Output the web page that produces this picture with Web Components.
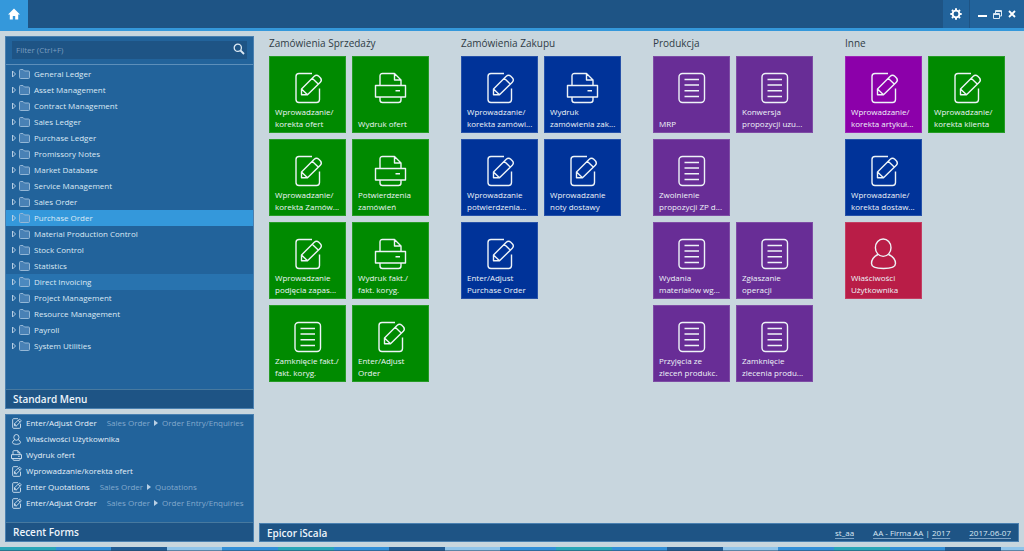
<!DOCTYPE html>
<html lang="pl">
<head>
<meta charset="utf-8">
<title>Epicor iScala</title>
<style>
  html, body { margin: 0; height: 100%; }
  body {
    background: #c8d6de;
    font-family: "Open Sans", "Noto Sans", sans-serif;
    font-size: 8px;
    line-height: 16px;
    color: #dce9f4;
    --panel: #22639b;
    --dark: #1e5485;
    --accent: #3498db;
    --edge: #4a80b0;
  }
</style>
</head>
<body>
<iscala-app></iscala-app>
<script>
const ICONS = {
  edit: '<path d="M21 1.5H8Q5 1.5 5 4.5V27.500Q5 30.500 8 30.500H25.500Q28.500 30.500 28.500 27.500V16.500"/><path d="M16.500 22.800H10.500V17L23 4.500Q25.500 2.300 27.800 4.300L29.500 6Q31.300 8.200 29.300 10.200ZM10.500 17L16.500 22.800M21.200 6.300L27.500 12.200"/>',
  print: '<path d="M6 13.500V4Q6 1.500 8.500 1.500H20.500L27 8V13.500M20.500 1.500V8H27M1.500 13.500H31.500V25H1.500ZM6 25V28Q6 30.500 8.500 30.500H24.500Q27 30.500 27 28V25M21.500 18.700H26"/>',
  doc: '<rect x="4" y="1.500" width="25.500" height="29" rx="3.500"/><path d="M9.500 7.500H24M9.500 13H24M9.500 18.700H24M9.500 24.500H24"/>',
  user: '<ellipse cx="16.200" cy="9.700" rx="7.800" ry="8.700"/><path d="M11 16.500Q4.500 19.500 4.500 25.500Q4.500 30.500 16.500 30.500Q28.500 30.500 28.500 25.500Q28.500 19.500 21.500 16.500"/>'
};
const icon = (name, w, h, stroke) =>
  `<svg width="${w}" height="${h}" viewBox="0 0 33 32" fill="none" stroke="currentColor" stroke-width="${stroke}" stroke-linejoin="round" aria-hidden="true">${ICONS[name]}</svg>`;

const RESET = `*{box-sizing:border-box}
  button{all:unset;box-sizing:border-box;cursor:pointer}
  svg{display:block;flex:none}`;

function define(name, render) {
  customElements.define(name, class extends HTMLElement {
    connectedCallback() {
      if (this.shadowRoot) return;
      const t = document.createElement('template');
      t.innerHTML = render(this);
      this.attachShadow({ mode: 'open' }).append(t.content.cloneNode(true));
    }
  });
}

define('title-bar', () => `<style>${RESET}
  :host{display:flex;height:31px;background:var(--dark);border-bottom:3px solid var(--accent)}
  button{display:grid;place-items:center;color:#fff}
  .home{width:28px;background:var(--accent)}
  .gear{width:27px;margin-left:auto;background:var(--panel);border-right:1px solid var(--dark)}
  .win{display:flex;align-items:center;justify-content:space-between;background:var(--panel);width:54px;padding:0 8px}
  </style>
  <button class="home" aria-label="Home"><svg width="12" height="12" viewBox="0 0 12 12" fill="#fff"><path d="M6 .5L12 6.500H10.200V11.500H7.200V8H4.800V11.500H1.800V6.500H0Z"/></svg></button>
  <button class="gear" aria-label="Settings"><svg width="12" height="12" viewBox="0 0 12 12" fill="none" stroke="#fff"><circle cx="6" cy="6" r="3.400" stroke-width="1.900"/><path stroke-width="2" d="M6 .3V2M6 10V11.700M.3 6H2M10 6H11.700M2 2L3.200 3.200M8.800 8.800L10 10M10 2L8.800 3.200M3.200 8.800L2 10"/></svg></button>
  <div class="win">
    <button aria-label="Minimize"><svg width="9" height="8" viewBox="0 0 9 8"><path d="M0 6H9" stroke="#fff" stroke-width="2"/></svg></button>
    <button aria-label="Restore"><svg width="9" height="9" viewBox="0 0 9 9" fill="none" stroke="#dce9f4"><path d="M2.500 3V.5H8.500V6H7M2 1.500H8.500M.5 3.500H6.500V8.500H.5ZM.5 4.500H6.500"/></svg></button>
    <button aria-label="Close"><svg width="8" height="8" viewBox="0 0 8 8"><path d="M1 1L7 7M7 1L1 7" stroke="#fff" stroke-width="1.800"/></svg></button>
  </div>`);

define('side-panel', el => `<style>${RESET}
  :host{display:flex;flex-direction:column;background:var(--panel);border:1px solid var(--edge)}
  .body{flex:1}
  h2{margin:0;padding:1px 7px 0;background:var(--dark);border-top:1px solid #47799f;font-size:10px;line-height:17px;font-weight:600;color:#eef5fb}
  </style><div class="body"><slot></slot></div><h2>${el.getAttribute('heading')}</h2>`);

define('filter-box', () => `<style>${RESET}
  :host{display:block;padding:4px 6px 5px;border-bottom:1px solid #5d8fba}
  label{display:flex;align-items:center;height:18px;background:var(--dark);padding:0 2px 0 4px}
  input{all:unset;flex:1;min-width:0;font-size:8px;line-height:18px;color:#fff}
  input::placeholder{color:#7a9cbf;opacity:1}
  svg{margin-bottom:2px}
  </style><label><input type="text" aria-label="Filter" placeholder="Filter (Ctrl+F)">
  <svg width="12" height="12" viewBox="0 0 12 12" fill="none" stroke="#dce9f4"><circle cx="4.800" cy="4.800" r="3.600" stroke-width="1.300"/><path d="M7.500 7.500L11 11" stroke-width="1.800"/></svg></label>`);

define('tree-item', () => `<style>${RESET}
  :host{display:block}
  :host([selected]){background:var(--accent)}
  :host([hovered]){background:#2873af}
  button{display:flex;align-items:center;width:100%;height:16px;padding-left:6px}
  .folder{margin:0 4px 0 3px}
  </style><button><svg width="4" height="8" viewBox="0 0 4 8" fill="none" stroke="#b5cde2"><path d="M.5 1L3.500 4L.5 7Z"/></svg>
  <svg class="folder" width="11" height="10" viewBox="0 0 11 10" fill="#6f9fd0" fill-opacity=".5" stroke="#94b7d6"><path d="M.5 1.500Q.5 .5 1.500 .5H4L5.500 2H9.500Q10.500 2 10.500 3V8.500Q10.500 9.500 9.500 9.500H1.500Q.5 9.500 .5 8.500Z"/></svg>
  <slot></slot></button>`);

define('recent-item', el => `<style>${RESET}
  :host{display:block}
  button{display:flex;align-items:center;width:100%;height:16px;padding-left:5px;white-space:nowrap}
  .name{margin:0 10px 0 4px;color:#e6f0f8}
  .path{display:flex;align-items:center;gap:4px;color:#82a9cd}
  </style><button>${icon(el.getAttribute('icon'), 11, 11, 2.6)}<span class="name"><slot></slot></span>${
    el.hasAttribute('path') ? `<span class="path">${el.getAttribute('path').split('>').map(s => `<span>${s}</span>`)
      .join('<svg width="4" height="6" viewBox="0 0 4 6" fill="#b9d0e5"><path d="M0 0L4 3L0 6Z"/></svg>')}</span>` : ''}</button>`);

define('app-tile', el => `<style>${RESET}
  :host{display:block;height:77px}
  button{display:flex;flex-direction:column;justify-content:space-between;width:100%;height:100%;
    background:var(--tile);border:1px solid rgba(255,255,255,.15);padding:15px 0 2px 5px;color:#eef4f8;line-height:12px;white-space:nowrap}
  svg{margin-left:16px}
  </style><button>${icon(el.getAttribute('icon'), 33, 32, 1.4)}<span><slot></slot></span></button>`);

define('tile-group', el => `<style>${RESET}
  :host{display:block}
  h2{margin:0 0 5px;font-size:10px;line-height:16px;font-weight:500;color:#303c46;white-space:nowrap}
  .grid{display:grid;grid-template-columns:77px 77px;gap:6px}
  ::slotted([first]){grid-column:1}
  </style><h2>${el.getAttribute('heading')}</h2><div class="grid"><slot></slot></div>`);

define('status-bar', () => `<style>${RESET}
  :host{display:flex;align-items:center;height:19px;padding:0 7px;background:var(--dark);border:1px solid var(--edge)}
  h1{margin:0 auto 0 0;font-size:10px;font-weight:600;color:#eef5fb}
  a{color:inherit;text-decoration:underline;text-decoration-thickness:1px;text-underline-offset:2px;text-decoration-color:#7da3c5}
  div{display:flex;gap:19px}
  </style><h1>Epicor iScala</h1><div><a href="#user">st_aa</a><span><a href="#company">AA - Firma AA</a> | <a href="#year">2017</a></span><a href="#date">2017-06-07</a></div>`);

define('colour-strip', () => `<style>
  :host{display:block;height:4px;border-bottom:1px solid rgba(40,70,100,.5);box-sizing:border-box;
  background:linear-gradient(90deg,#2ba6b8 20%,#3490d8 20% 40%,#215c94 40% 60%,#90c4ea 60% 80%,#3490d8 80%) 0 0/278px 100%}
  </style>`);

const modules = ['General Ledger','Asset Management','Contract Management','Sales Ledger','Purchase Ledger','Promissory Notes','Market Database','Service Management','Sales Order','Purchase Order','Material Production Control','Stock Control','Statistics','Direct Invoicing','Project Management','Resource Management','Payroll','System Utilities'];
const state = { 'Purchase Order': 'selected', 'Direct Invoicing': 'hovered' };
const recents = [
  ['edit','Enter/Adjust Order','Sales Order>Order Entry/Enquiries'],
  ['user','Właściwości Użytkownika'],
  ['print','Wydruk ofert'],
  ['edit','Wprowadzanie/korekta ofert'],
  ['edit','Enter Quotations','Sales Order>Quotations'],
  ['edit','Enter/Adjust Order','Sales Order>Order Entry/Enquiries']
];
const G = '#008a00', B = '#003399', P = '#682d96';
const groups = [
  ['Zamówienia Sprzedaży', [
    [G,'edit','Wprowadzanie/|korekta ofert'],[G,'print','Wydruk ofert'],
    [G,'edit','Wprowadzanie/|korekta Zamów...'],[G,'print','Potwierdzenia|zamówień'],
    [G,'edit','Wprowadzanie|podjęcia zapas...'],[G,'print','Wydruk fakt./|fakt. koryg.'],
    [G,'doc','Zamknięcie fakt./|fakt. koryg.'],[G,'edit','Enter/Adjust|Order']]],
  ['Zamówienia Zakupu', [
    [B,'edit','Wprowadzanie/|korekta zamówi...'],[B,'print','Wydruk|zamówienia zak...'],
    [B,'edit','Wprowadzanie|potwierdzenia...'],[B,'edit','Wprowadzanie|noty dostawy'],
    [B,'edit','Enter/Adjust|Purchase Order']]],
  ['Produkcja', [
    [P,'doc','MRP'],[P,'doc','Konwersja|propozycji uzu...'],
    [P,'doc','Zwolnienie|propozycji ZP d...'],
    [P,'doc','Wydania|materiałów wg...','first'],[P,'doc','Zgłaszanie|operacji'],
    [P,'doc','Przyjęcia ze|zleceń produkc.'],[P,'doc','Zamknięcie|zlecenia produ...']]],
  ['Inne', [
    ['#8c00aa','edit','Wprowadzanie/|korekta artykuł...'],[G,'edit','Wprowadzanie/|korekta klienta'],
    [B,'edit','Wprowadzanie/|korekta dostaw...'],
    ['#b91d47','user','Właściwości|Użytkownika','first']]]
];

define('iscala-app', () => `<style>${RESET}
  :host{display:flex;flex-direction:column;min-height:100vh}
  main{flex:1;display:flex;gap:5px;padding:5px}
  aside{display:flex;flex-direction:column;gap:5px;width:249px;flex:none}
  .menu{flex:1}
  .tree{padding-top:1px}
  .recent{padding-bottom:11px}
  section{flex:1;min-width:0;display:flex;flex-direction:column}
  .groups{flex:1;display:flex;flex-wrap:wrap;align-content:flex-start;gap:16px 32px;padding:0 0 16px 10px;margin-top:-1px}
  </style>
  <title-bar></title-bar>
  <main>
    <aside>
      <side-panel class="menu" heading="Standard Menu"><filter-box></filter-box>
        <div class="tree">${modules.map(m => `<tree-item ${state[m] || ''}>${m}</tree-item>`).join('')}</div></side-panel>
      <side-panel heading="Recent Forms"><div class="recent">${recents.map(([i, n, p]) =>
        `<recent-item icon="${i}" ${p ? `path="${p}"` : ''}>${n}</recent-item>`).join('')}</div></side-panel>
    </aside>
    <section>
      <div class="groups">${groups.map(([h, tiles]) => `<tile-group heading="${h}">${tiles.map(([c, i, t, f]) =>
        `<app-tile icon="${i}" style="--tile:${c}" ${f || ''}>${t.replace('|', '<br>')}</app-tile>`).join('')}</tile-group>`).join('')}</div>
      <status-bar></status-bar>
    </section>
  </main>
  <colour-strip></colour-strip>`);
</script>
</body>
</html>
